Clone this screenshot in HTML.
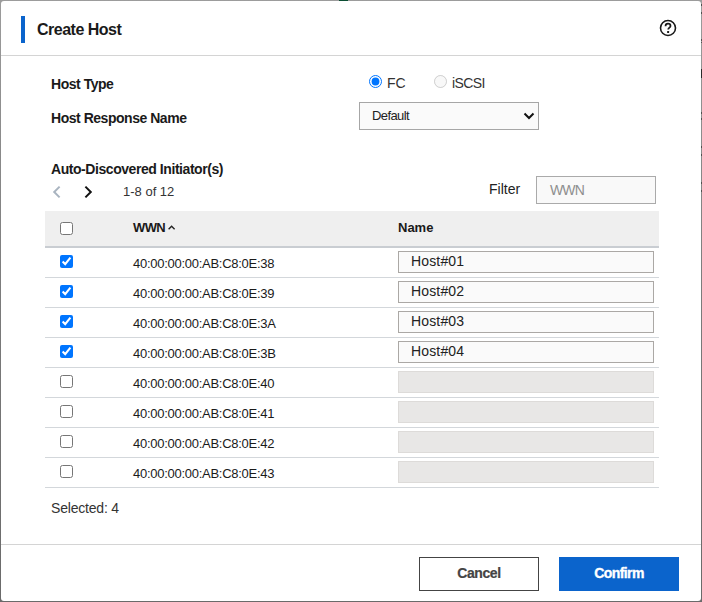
<!DOCTYPE html>
<html><head><meta charset="utf-8">
<style>
*{margin:0;padding:0;box-sizing:border-box}
html,body{width:702px;height:602px;overflow:hidden;background:linear-gradient(#9c9c9c 0px,#8a8a8a 150px,#7b7b7b 300px,#6a6a6a 602px);font-family:"Liberation Sans",sans-serif;color:#1a1a1a}
#dlg{position:absolute;left:1px;top:1px;width:700px;height:600px;background:#fff;border-radius:3px;overflow:hidden}
.a{position:absolute;white-space:nowrap}
.t{position:absolute;white-space:nowrap;line-height:20px;height:20px}
.b{font-weight:bold}
.hr{position:absolute;left:0;width:700px;height:1px;background:#d4d4d4}
.cb{position:absolute;width:13px;height:13px;border:1px solid #555;border-radius:2px;background:#fff}
.cbc{position:absolute;width:13px;height:13px;border-radius:2px;background:#1a73e8}
.n{position:absolute;margin:0;width:13px;height:13px}
.rowline{position:absolute;left:44px;width:614px;height:1px;background:#d3d7db}
.inp{position:absolute;left:397px;width:256px;height:22px;border:1px solid #aba8a5;background:#fafafa}
.dis{position:absolute;left:397px;width:256px;height:22px;border:1px solid #dddbd9;background:#e8e7e6}
.wwn{left:132px;font-size:13px;letter-spacing:-0.27px}
.nm{left:410px;font-size:14px;letter-spacing:0.15px;color:#222}
</style></head><body>
<div class="a" style="left:339px;top:0;width:9px;height:1px;background:#0b4d33"></div>
<div class="a" style="left:701px;top:4px;width:1px;height:2px;background:#505050"></div><div class="a" style="left:701px;top:12px;width:1px;height:2px;background:#505050"></div><div class="a" style="left:701px;top:39px;width:1px;height:2px;background:#505050"></div><div class="a" style="left:701px;top:42px;width:1px;height:1px;background:#505050"></div><div class="a" style="left:701px;top:69px;width:1px;height:9px;background:#2a2a2a"></div><div class="a" style="left:701px;top:112px;width:1px;height:2px;background:#505050"></div><div class="a" style="left:701px;top:118px;width:1px;height:2px;background:#505050"></div><div class="a" style="left:701px;top:146px;width:1px;height:2px;background:#505050"></div><div class="a" style="left:701px;top:154px;width:1px;height:2px;background:#505050"></div><div class="a" style="left:701px;top:182px;width:1px;height:2px;background:#505050"></div><div class="a" style="left:701px;top:190px;width:1px;height:2px;background:#505050"></div>
<div id="dlg">
  <!-- header -->
  <div class="a" style="left:20px;top:15px;width:4px;height:27px;background:#0b64cc"></div>
  <div class="t b" style="left:36px;top:19px;font-size:16px;letter-spacing:-0.5px">Create Host</div>
  <svg class="a" style="left:658px;top:18px" width="18" height="18" viewBox="0 0 18 18">
    <circle cx="9" cy="9" r="7.5" fill="none" stroke="#1a1a1a" stroke-width="1.6"/>
    <path d="M6.5 7.2 C6.5 5.6 7.7 4.7 9 4.7 C10.5 4.7 11.5 5.7 11.5 6.9 C11.5 8.5 9.2 8.7 9.2 10.5" fill="none" stroke="#1a1a1a" stroke-width="1.75"/>
    <rect x="8.1" y="11.9" width="2" height="2" rx="0.5" fill="#1a1a1a"/>
  </svg>
  <div class="hr" style="top:54px"></div>

  <div class="t b" style="left:50px;top:73px;font-size:14px;letter-spacing:-0.47px">Host Type</div>
  <div class="t b" style="left:50px;top:107px;font-size:14px;letter-spacing:-0.47px">Host Response Name</div>

  <!-- radios -->
  <input type="radio" class="n" name="r" checked style="left:368px;top:74px">
  <div class="t" style="left:386px;top:72px;font-size:14px;color:#333">FC</div>
  <input type="radio" class="n" name="r2" disabled style="left:433px;top:74px">
  <div class="t" style="left:451px;top:72px;font-size:14px;letter-spacing:-0.6px;color:#333">iSCSI</div>

  <!-- select -->
  <div class="a" style="left:358px;top:101px;width:180px;height:28px;border:1px solid #a6a6a6;background:#fafafa"></div>
  <div class="t" style="left:371px;top:105px;font-size:13px;letter-spacing:-0.6px;color:#222">Default</div>
  <svg class="a" style="left:522px;top:110px" width="12" height="10" viewBox="0 0 12 10">
    <path d="M1.5 2.5 L6 7 L10.5 2.5" fill="none" stroke="#111" stroke-width="2"/>
  </svg>

  <div class="t b" style="left:50px;top:158px;font-size:14px;letter-spacing:-0.44px">Auto-Discovered Initiator(s)</div>
  <!-- pager -->
  <svg class="a" style="left:50px;top:184px" width="12" height="14" viewBox="0 0 12 14">
    <path d="M8.6 1.6 L3.2 7 L8.6 12.4" fill="none" stroke="#a9b4c0" stroke-width="2"/>
  </svg>
  <svg class="a" style="left:81px;top:184px" width="12" height="14" viewBox="0 0 12 14">
    <path d="M3.4 1.6 L8.8 7 L3.4 12.4" fill="none" stroke="#111" stroke-width="2"/>
  </svg>
  <div class="t" style="left:122px;top:181px;font-size:13px;color:#333">1-8 of 12</div>

  <div class="t" style="left:488px;top:178px;font-size:14px;color:#222">Filter</div>
  <div class="a" style="left:535px;top:175px;width:120px;height:28px;border:1px solid #aaa;background:#f9f9f9"></div>
  <div class="t" style="left:549px;top:179px;font-size:14px;color:#8f8f8f;letter-spacing:-0.9px">WWN</div>

  <!-- table header -->
  <div class="a" style="left:44px;top:210px;width:614px;height:35px;background:#efefef"></div>
  <div class="a" style="left:44px;top:245px;width:614px;height:2px;background:#c9cdd2"></div>
  <input type="checkbox" class="n" style="left:59px;top:221px">
  <div class="t b" style="left:132px;top:217px;font-size:13px;letter-spacing:-0.6px">WWN</div>
  <svg class="a" style="left:166px;top:223px" width="9" height="7" viewBox="0 0 9 7">
    <path d="M1.6 5.2 L4.6 2.2 L7.6 5.2" fill="none" stroke="#222" stroke-width="1.4"/>
  </svg>
  <div class="t b" style="left:397px;top:217px;font-size:13px">Name</div>

    <input type="checkbox" class="n" checked style="left:59px;top:254px"><div class="t wwn" style="top:253px">40:00:00:00:AB:C8:0E:38</div><div class="inp" style="top:250px"></div><div class="t nm" style="top:250px">Host#01</div><div class="rowline" style="top:276px"></div>
  <input type="checkbox" class="n" checked style="left:59px;top:284px"><div class="t wwn" style="top:283px">40:00:00:00:AB:C8:0E:39</div><div class="inp" style="top:280px"></div><div class="t nm" style="top:280px">Host#02</div><div class="rowline" style="top:306px"></div>
  <input type="checkbox" class="n" checked style="left:59px;top:314px"><div class="t wwn" style="top:313px">40:00:00:00:AB:C8:0E:3A</div><div class="inp" style="top:310px"></div><div class="t nm" style="top:310px">Host#03</div><div class="rowline" style="top:336px"></div>
  <input type="checkbox" class="n" checked style="left:59px;top:344px"><div class="t wwn" style="top:343px">40:00:00:00:AB:C8:0E:3B</div><div class="inp" style="top:340px"></div><div class="t nm" style="top:340px">Host#04</div><div class="rowline" style="top:366px"></div>
  <input type="checkbox" class="n" style="left:59px;top:374px"><div class="t wwn" style="top:373px">40:00:00:00:AB:C8:0E:40</div><div class="dis" style="top:370px"></div><div class="rowline" style="top:396px"></div>
  <input type="checkbox" class="n" style="left:59px;top:404px"><div class="t wwn" style="top:403px">40:00:00:00:AB:C8:0E:41</div><div class="dis" style="top:400px"></div><div class="rowline" style="top:426px"></div>
  <input type="checkbox" class="n" style="left:59px;top:434px"><div class="t wwn" style="top:433px">40:00:00:00:AB:C8:0E:42</div><div class="dis" style="top:430px"></div><div class="rowline" style="top:456px"></div>
  <input type="checkbox" class="n" style="left:59px;top:464px"><div class="t wwn" style="top:463px">40:00:00:00:AB:C8:0E:43</div><div class="dis" style="top:460px"></div><div class="rowline" style="top:486px"></div>

  <div class="t" style="left:50px;top:497px;font-size:14px;color:#333;letter-spacing:-0.2px">Selected: 4</div>
  <div class="hr" style="top:543px"></div>

  <div class="a" style="left:418px;top:556px;width:120px;height:34px;border:1px solid #444;background:#fff"></div>
  <div class="t b" style="left:418px;top:562px;width:120px;text-align:center;font-size:14px;color:#444;letter-spacing:-0.4px;-webkit-text-stroke:0.2px #444">Cancel</div>
  <div class="a" style="left:558px;top:556px;width:120px;height:34px;background:#0b64cc"></div>
  <div class="t b" style="left:558px;top:562px;width:120px;text-align:center;font-size:14px;color:#fff;-webkit-text-stroke:0.35px #fff;letter-spacing:-0.6px">Confirm</div>
</div>
</body></html>
